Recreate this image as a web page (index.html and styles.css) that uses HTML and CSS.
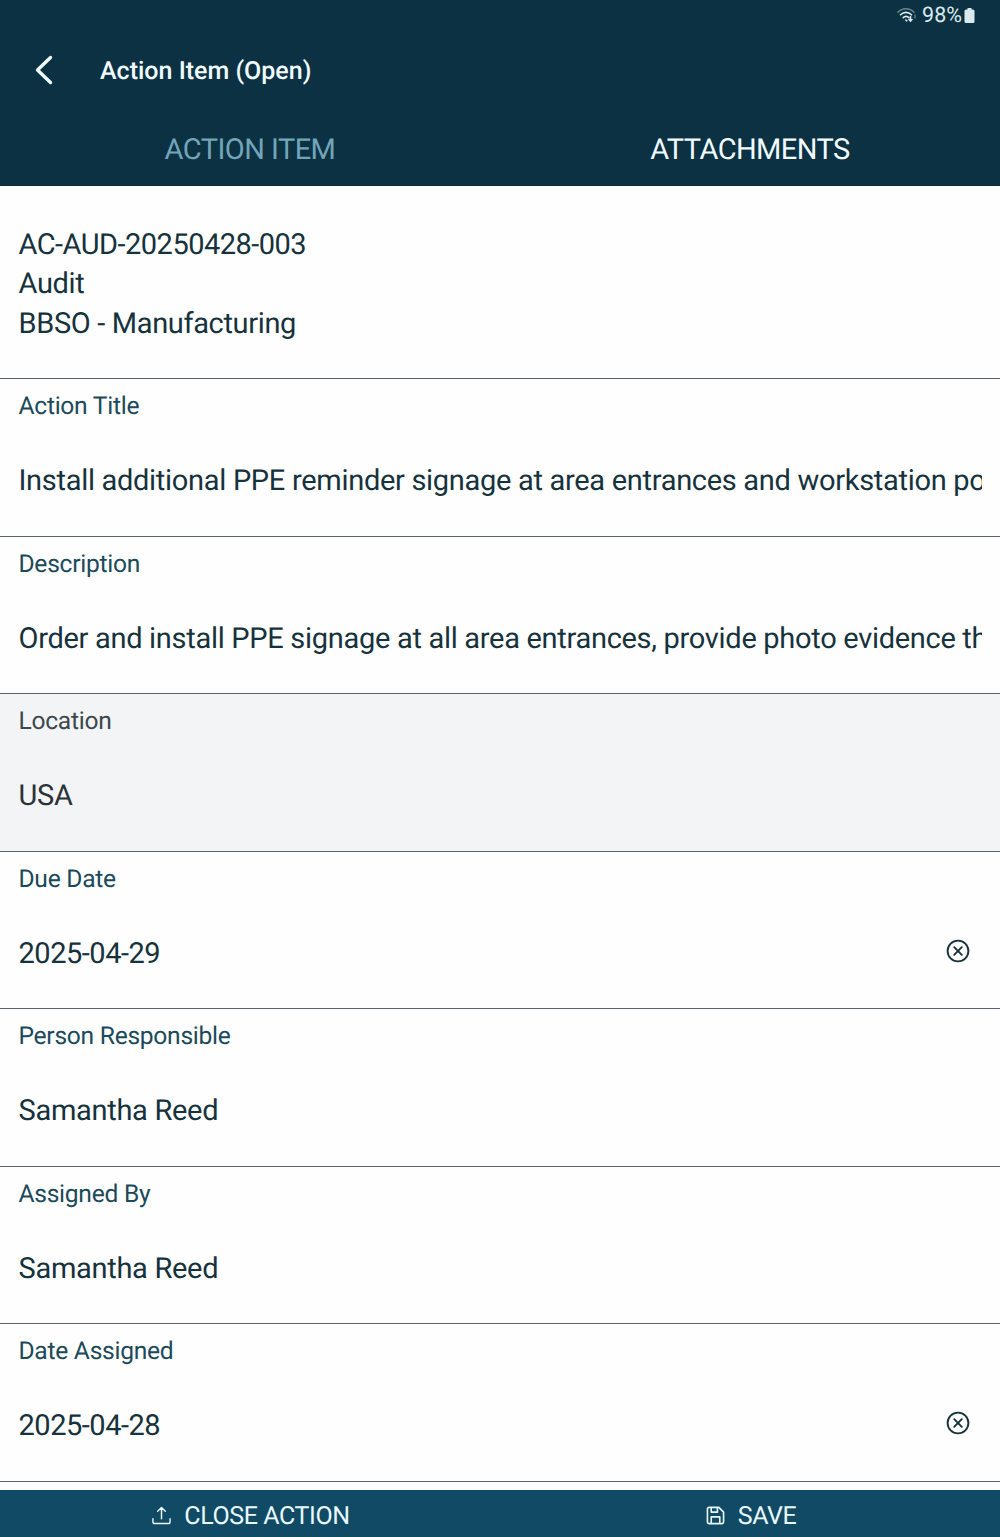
FILE: index.html
```
<!DOCTYPE html>
<html lang="en">
<head>
  <meta charset="UTF-8" />
  <meta name="viewport" content="width=device-width, initial-scale=1.0" />
  <title>Action Item</title>
  <link rel="stylesheet" href="styles.css">
</head>
<body>
  <header class="header">
    <div class="status-bar">
      <svg class="wifi" viewBox="0 0 20 16" fill="none" stroke="currentColor" stroke-width="1.6" stroke-linecap="round">
        <path d="M1 5.2C5.5.6 12.5.6 17 5.2" opacity=".45" />
        <path d="M3.5 7.8c3.2-3.2 7.8-3.2 11 0" />
        <path d="M6.2 10.6c1.700-1.700 4-1.700 5.600 0" />
        <path d="M8.800 13l1 .8M13.500 9.500v4.300M12 12.500l1.500 1.500 1.500-1.500" />
        <path d="M18 8v3" opacity=".35" />
      </svg>
      <span class="battery-text">98%</span>
      <svg class="battery" viewBox="0 0 11 15" fill="currentColor">
        <path d="M3.500 0h4v1.500H9A1.500 1.500 0 0 1 10.500 3v10.500A1.500 1.500 0 0 1 9 15H2A1.500 1.500 0 0 1 .5 13.500V3A1.500 1.500 0 0 1 2 1.500h1.500z" />
      </svg>
    </div>
    <div class="title-bar">
      <svg class="back" viewBox="0 0 20 30" fill="none" stroke="currentColor" stroke-width="3.400" stroke-linecap="round" stroke-linejoin="round">
        <path d="M16.500 2.500L3.500 15l13 12.500" />
      </svg>
      <h1>Action Item (Open)</h1>
    </div>
    <nav class="tabs">
      <div class="tab active">ACTION ITEM</div>
      <div class="tab">ATTACHMENTS</div>
    </nav>
  </header>

  <main class="form">
    <section class="summary">
      <p class="code">AC-AUD-20250428-003</p>
      <p>Audit</p>
      <p>BBSO - Manufacturing</p>
    </section>

    <section class="field">
      <div class="label">Action Title</div>
      <div class="value">Install additional PPE reminder signage at area entrances and workstation po</div>
    </section>
    <section class="field">
      <div class="label">Description</div>
      <div class="value">Order and install PPE signage at all area entrances, provide photo evidence th</div>
    </section>
    <section class="field disabled">
      <div class="label">Location</div>
      <div class="value">USA</div>
    </section>
    <section class="field">
      <div class="label">Due Date</div>
      <div class="value-row">
        <div class="value date">2025-04-29</div>
        <svg class="clear" viewBox="0 0 24 24" fill="none" stroke="currentColor" stroke-width="1.900" stroke-linecap="round">
          <circle cx="12" cy="12" r="10.400" />
          <path d="M8.200 8.200l7.600 7.600M15.800 8.200l-7.600 7.600" />
        </svg>
      </div>
    </section>
    <section class="field">
      <div class="label">Person Responsible</div>
      <div class="value">Samantha Reed</div>
    </section>
    <section class="field">
      <div class="label">Assigned By</div>
      <div class="value">Samantha Reed</div>
    </section>
    <section class="field">
      <div class="label">Date Assigned</div>
      <div class="value-row">
        <div class="value date">2025-04-28</div>
        <svg class="clear" viewBox="0 0 24 24" fill="none" stroke="currentColor" stroke-width="1.900" stroke-linecap="round">
          <circle cx="12" cy="12" r="10.400" />
          <path d="M8.200 8.200l7.600 7.600M15.800 8.200l-7.600 7.600" />
        </svg>
      </div>
    </section>
  </main>

  <footer class="actions">
    <div class="action">
      <svg class="icon" viewBox="0 0 20 20" fill="none" stroke="currentColor" stroke-width="1.500" stroke-linecap="round" stroke-linejoin="round">
        <path d="M1 13.500v3a2 2 0 0 0 2 2h14a2 2 0 0 0 2-2v-3M10 13.500V1.800M6 5.600l4-4 4 4" />
      </svg>
      <span>CLOSE ACTION</span>
    </div>
    <div class="action">
      <svg class="icon" viewBox="0 0 20 20" fill="none" stroke="currentColor" stroke-width="1.700" stroke-linejoin="round">
        <path d="M3.300 1.500h10.200L18.500 6.500v10.200a1.800 1.800 0 0 1-1.800 1.800H3.300A1.800 1.800 0 0 1 1.500 16.700V3.300A1.800 1.800 0 0 1 3.300 1.500z" />
        <path d="M5.500 1.500v5h6.500v-5M5.500 18.500v-7h9v7" />
      </svg>
      <span>SAVE</span>
    </div>
  </footer>
</body>
</html>
```
FILE: styles.css
```
* {
  box-sizing: border-box;
}

body {
  margin: 0;
  height: 1537px;
  display: flex;
  flex-direction: column;
  font-family: Roboto, sans-serif;
  text-rendering: geometricPrecision;
  background-color: #fefefe;
  color: #16323c;
  overflow: hidden;
}

.header {
  height: 186px;
  flex-shrink: 0;
  background-color: #0c3142;
  color: #f0fbff;
  border-bottom: 2px solid #122f38;
}

.status-bar {
  display: flex;
  align-items: center;
  justify-content: flex-end;
  height: 30px;
  padding-right: 25px;
  color: #d9e9ee;
}

.wifi {
  width: 20px;
  height: 16px;
  margin-right: 5px;
}

.battery-text {
  padding-top: 1px;
  font-size: 21.5px;
  line-height: 30px;
}

.battery {
  width: 11px;
  height: 15px;
  margin-left: 2px;
}

.title-bar {
  display: flex;
  align-items: center;
  height: 80px;
  padding-left: 34px;
}

.back {
  width: 20px;
  height: 30px;
  margin-right: 46px;
}

h1 {
  margin: 0;
  padding-top: 2px;
  font-size: 25px;
  font-weight: 500;
}

.tabs {
  display: flex;
  height: 74px;
}

.tab {
  flex: 1;
  display: flex;
  align-items: center;
  justify-content: center;
  padding-top: 6px;
  font-size: 29px;
  letter-spacing: -0.55px;
}

.active {
  color: #72a5b8;
}

.form {
  flex: 1;
  min-height: 0;
}

.summary {
  height: 193px;
  padding: 40px 18.500px 0;
  border-bottom: 1px solid #58646a;
}

.summary p {
  margin: 0;
  font-size: 29px;
  line-height: 39.4px;
  letter-spacing: -0.35px;
}

.summary .code {
  letter-spacing: -0.52px;
}

.field {
  height: 157.5px;
  padding: 11px 18px 0 18.5px;
  border-bottom: 1px solid #58646a;
}

.label {
  font-size: 24.6px;
  line-height: 34px;
  letter-spacing: -0.27px;
  color: #1c4a5a;
}

.value {
  margin-top: 37px;
  font-size: 29px;
  line-height: 40px;
  letter-spacing: -0.3px;
  white-space: nowrap;
  overflow: hidden;
}

.date {
  letter-spacing: -0.48px;
}

.value-row {
  display: flex;
  justify-content: space-between;
}

.clear {
  width: 24px;
  height: 24px;
  margin: 42px 12.5px 0 0;
}

.disabled {
  background-color: #f2f4f6;
  color: #2c3338;
}

.disabled .label {
  color: #3d474d;
}

.actions {
  display: flex;
  flex-shrink: 0;
  height: 47px;
  background-color: #114a64;
  color: #e8f8fd;
}

.action {
  flex: 1;
  display: flex;
  align-items: center;
  justify-content: center;
  gap: 13px;
  padding: 5px 0 0 2px;
  font-size: 25px;
  letter-spacing: -0.4px;
}

.icon {
  width: 19px;
  height: 19px;
  margin-bottom: 2px;
}
```
